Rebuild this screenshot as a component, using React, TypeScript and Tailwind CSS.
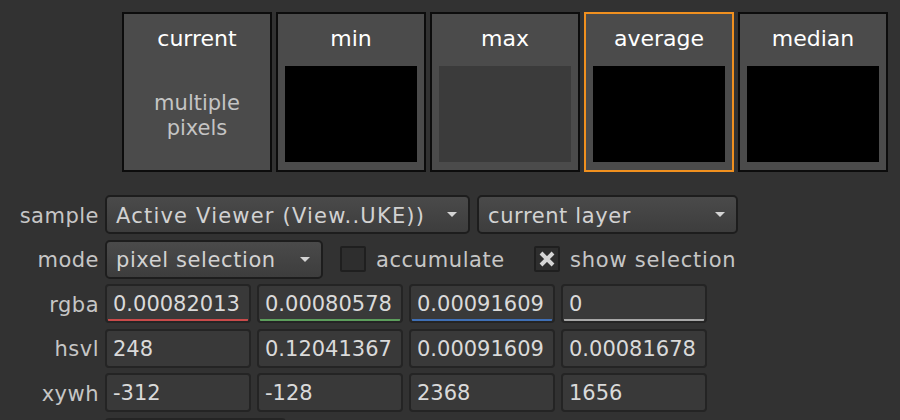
import React from "react";

const font = { fontFamily: '"DejaVu Sans", Verdana, sans-serif' };

const tiles = [
  { title: "current", swatch: null, active: false },
  { title: "min", swatch: "bg-black", active: false },
  { title: "max", swatch: "bg-[#3b3b3b]", active: false },
  { title: "average", swatch: "bg-black", active: true },
  { title: "median", swatch: "bg-black", active: false },
];

function Tile({ title, swatch, active }: { title: string; swatch: string | null; active: boolean }) {
  return (
    <div
      className={
        "w-[150px] h-[160px] border-2 bg-[#4b4b4b] flex flex-col px-[7px] pb-[8px] " +
        (active ? "border-[#f0901f]" : "border-[#0c0c0c]")
      }
    >
      <div className="h-[52px] pt-[12px] leading-[26px] text-center text-[22px] text-white">{title}</div>
      {swatch ? (
        <div className={"h-[96px] " + swatch} />
      ) : (
        <div className="h-[96px] pt-[4px] flex flex-col items-center justify-center text-[21px] leading-[25px] text-[#c4c4c4]">
          <span>multiple</span>
          <span>pixels</span>
        </div>
      )}
    </div>
  );
}

function Arrow() {
  return (
    <svg width="10" height="5" viewBox="0 0 10 5" className="shrink-0">
      <path d="M0 0 L10 0 L5 5 Z" fill="#d4d4d4" />
    </svg>
  );
}

function Dropdown({ label, w, track }: { label: string; w: string; track: string }) {
  return (
    <div
      className={
        "h-[39px] flex items-center justify-between pl-[9px] pr-[11px] rounded-[5px] border-2 border-[#1d1d1d] bg-gradient-to-b from-[#4a4a4a] to-[#3d3d3d] text-[21px] text-[#d2d2d2] " +
        w
      }
    >
      <span className={"whitespace-nowrap pt-[4px] " + track}>{label}</span>
      <Arrow />
    </div>
  );
}

function Label({ text }: { text: string }) {
  return (
    <div className="w-[99px] shrink-0 mr-[6px] pt-[4px] text-right text-[21px] text-[#c6c6c6] tracking-[0.5px]">
      {text}
    </div>
  );
}

function Field({ value, line }: { value: string; line?: string }) {
  return (
    <div className="relative w-[146px] h-[39px] shrink-0 flex items-center pl-[6px] pt-[3px] rounded-[4px] border-2 border-[#242424] bg-[#393939] text-[21px] text-[#dadada] whitespace-nowrap overflow-hidden">
      {value}
      {line && <span className={"absolute left-[1px] right-[1px] bottom-0 h-[2px] " + line} />}
    </div>
  );
}

function Check({ checked }: { checked: boolean }) {
  return (
    <div className="w-[26px] h-[26px] rounded-[2px] border-2 border-[#1f1f1f] bg-[#2e2e2e] flex items-center justify-center">
      {checked && (
        <svg width="16" height="16" viewBox="0 0 16 16">
          <path d="M2 2 L14 14 M14 2 L2 14" stroke="#d6d6d6" strokeWidth="4" />
        </svg>
      )}
    </div>
  );
}

export default function App() {
  return (
    <div className="w-[900px] h-[420px] overflow-hidden bg-[#323232]" style={font}>
      <div className="flex gap-[4px] pl-[122px] pt-[12px]">
        {tiles.map((t) => (
          <Tile key={t.title} {...t} />
        ))}
      </div>

      <div className="mt-[23px] flex flex-col gap-[5.5px]">
        <div className="flex items-center h-[39px]">
          <Label text="sample" />
          <Dropdown label="Active Viewer (View..UKE))" w="w-[365px]" track="tracking-[1.2px]" />
          <div className="w-[7px]" />
          <Dropdown label="current layer" w="w-[261px]" track="tracking-[0.6px]" />
        </div>

        <div className="flex items-center h-[39px]">
          <Label text="mode" />
          <Dropdown label="pixel selection" w="w-[218px]" track="tracking-[0.6px]" />
          <div className="ml-[17px] flex items-center gap-[10px]">
            <Check checked={false} />
            <span className="pt-[4px] text-[21px] text-[#c6c6c6] tracking-[0.6px]">accumulate</span>
          </div>
          <div className="ml-[29px] flex items-center gap-[10px]">
            <Check checked={true} />
            <span className="pt-[4px] text-[21px] text-[#c6c6c6] tracking-[0.8px]">show selection</span>
          </div>
        </div>

        <div className="flex items-center h-[39px]">
          <Label text="rgba" />
          <div className="flex gap-[6px]">
            <Field value="0.00082013" line="bg-[#c94a4a]" />
            <Field value="0.00080578" line="bg-[#5c9e5c]" />
            <Field value="0.00091609" line="bg-[#3f6fb5]" />
            <Field value="0" line="bg-[#a8a8a8]" />
          </div>
        </div>

        <div className="flex items-center h-[39px]">
          <Label text="hsvl" />
          <div className="flex gap-[6px]">
            <Field value="248" />
            <Field value="0.12041367" />
            <Field value="0.00091609" />
            <Field value="0.00081678" />
          </div>
        </div>

        <div className="flex items-center h-[39px]">
          <Label text="xywh" />
          <div className="flex gap-[6px]">
            <Field value="-312" />
            <Field value="-128" />
            <Field value="2368" />
            <Field value="1656" />
          </div>
        </div>

        <div className="flex items-center h-[39px]">
          <div className="w-[105px] shrink-0" />
          <div className="w-[181px] h-[39px] rounded-[4px] border-2 border-[#242424] bg-[#393939]" />
        </div>
      </div>
    </div>
  );
}
